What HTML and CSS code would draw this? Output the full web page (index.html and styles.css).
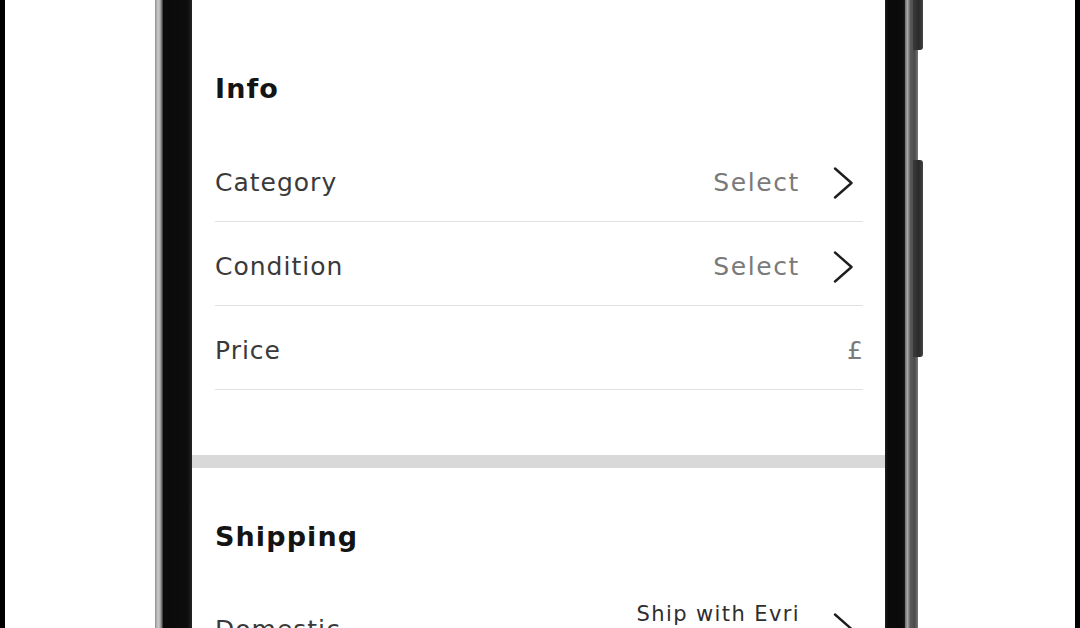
FILE: index.html
```html
<!DOCTYPE html>
<html lang="en">
<head>
<meta charset="utf-8">
<title>Sell item</title>
<link rel="stylesheet" href="styles.css">
</head>
<body>
<div class="stage">
  <div class="edge"></div>
  <div class="phone">
    <div class="rim rim-left"></div>
    <div class="bezel bezel-left"></div>
    <main class="screen">
      <section class="section section-info">
        <h2 class="section-title">Info</h2>
        <ul class="list">
          <li class="row">
            <span class="row-label">Category</span>
            <span class="row-value">
              <span class="value-text">Select</span>
              <svg class="chevron" viewBox="0 0 30 32" width="30" height="32" aria-hidden="true"><path d="M2 1.5 L18.5 16 L2 30.5" fill="none" stroke="#1e1e1e" stroke-width="2.4" stroke-linecap="round" stroke-linejoin="round"/></svg>
            </span>
          </li>
          <li class="row">
            <span class="row-label">Condition</span>
            <span class="row-value">
              <span class="value-text">Select</span>
              <svg class="chevron" viewBox="0 0 30 32" width="30" height="32" aria-hidden="true"><path d="M2 1.5 L18.5 16 L2 30.5" fill="none" stroke="#1e1e1e" stroke-width="2.4" stroke-linecap="round" stroke-linejoin="round"/></svg>
            </span>
          </li>
          <li class="row">
            <span class="row-label">Price</span>
            <span class="row-value"><span class="currency">£</span></span>
          </li>
        </ul>
      </section>
      <div class="band"></div>
      <section class="section section-shipping">
        <h2 class="section-title">Shipping</h2>
        <div class="row row-ship">
          <span class="row-label">Domestic</span>
          <span class="row-value">
            <span class="ship-text"><span>Ship with Evri</span><span>and more</span></span>
            <svg class="chevron" viewBox="0 0 30 32" width="30" height="32" aria-hidden="true"><path d="M2 1.5 L18.5 16 L2 30.5" fill="none" stroke="#1e1e1e" stroke-width="2.4" stroke-linecap="round" stroke-linejoin="round"/></svg>
          </span>
        </div>
      </section>
    </main>
    <div class="bezel bezel-right"></div>
    <div class="rim rim-right"></div>
    <div class="side-button button-top"></div>
    <div class="side-button button-mid"></div>
  </div>
  <div class="edge edge-right"></div>
</div>
</body>
</html>
```
FILE: styles.css
```css
html, body {
  margin: 0;
  padding: 0;
  background: #ffffff;
}

.stage {
  display: flex;
  height: 628px;
  overflow: hidden;
  background: #ffffff;
  font-family: "DejaVu Sans", "Liberation Sans", sans-serif;
}

.edge {
  width: 5px;
  flex: none;
  background: #000;
}

.edge-right {
  margin-left: auto;
}

.phone {
  position: relative;
  display: flex;
  margin-left: 150px;
  flex: none;
}

.rim {
  flex: none;
}

.rim-left {
  width: 8px;
  background: linear-gradient(to right, #8a8a8a 0, #bdbdbd 25%, #c9c9c9 50%, #8e8e8e 75%, #2a2a2a 100%);
}

.bezel {
  flex: none;
  background: #0b0b0b;
}

.bezel-left {
  width: 29px;
  background: linear-gradient(to right, #0a0a0a 0, #0d0d0d 85%, #262626 100%);
}

.bezel-right {
  width: 20px;
  background: linear-gradient(to right, #1d1d1d 0, #0a0a0a 15%, #0b0b0b 90%, #1a1a1a 100%);
}

.rim-right {
  width: 13px;
  background: linear-gradient(to right, #6c6c6c 0, #a8a8a8 20%, #5a5a5a 40%, #4a4a4a 75%, #777 100%);
}

.side-button {
  position: absolute;
  left: 758px;
  width: 10px;
  background: linear-gradient(to right, #3a3a3a, #2b2b2b 60%, #444);
  border-radius: 0 3px 3px 0;
}

.button-top {
  top: -40px;
  height: 90px;
}

.button-mid {
  top: 160px;
  height: 197px;
}

.screen {
  width: 693px;
  flex: none;
  background: #fff;
}

.section {
  padding: 0 22px 0 23px;
}

.section-info {
  padding-top: 72px;
  padding-bottom: 65px;
}

.section-title {
  margin: 0;
  font-size: 27px;
  line-height: 34px;
  font-weight: 700;
  letter-spacing: 1.1px;
  color: #141414;
}

.list {
  list-style: none;
  margin: 32px 0 0;
  padding: 0;
}

.row {
  display: flex;
  align-items: center;
  justify-content: space-between;
  box-sizing: border-box;
  height: 84px;
  padding-top: 6px;
  border-bottom: 1px solid #e2e2e2;
}

.row-label {
  font-size: 25px;
  letter-spacing: 1px;
  color: #3a3a3a;
}

.row-value {
  display: flex;
  align-items: center;
  gap: 33px;
}

.value-text {
  font-size: 25px;
  letter-spacing: 1.6px;
  color: #7a7a7a;
}

.currency {
  font-size: 25px;
  color: #7a7a7a;
}

.chevron {
  display: block;
  flex: none;
}

.band {
  height: 13px;
  background: #d9d9d9;
}

.section-shipping {
  padding-top: 52px;
}

.row-ship {
  height: auto;
  padding-top: 45px;
  border-bottom: none;
}

.ship-text {
  display: flex;
  flex-direction: column;
  align-items: flex-end;
  font-size: 21px;
  line-height: 30px;
  letter-spacing: 1.4px;
  color: #2e2e2e;
}
```
